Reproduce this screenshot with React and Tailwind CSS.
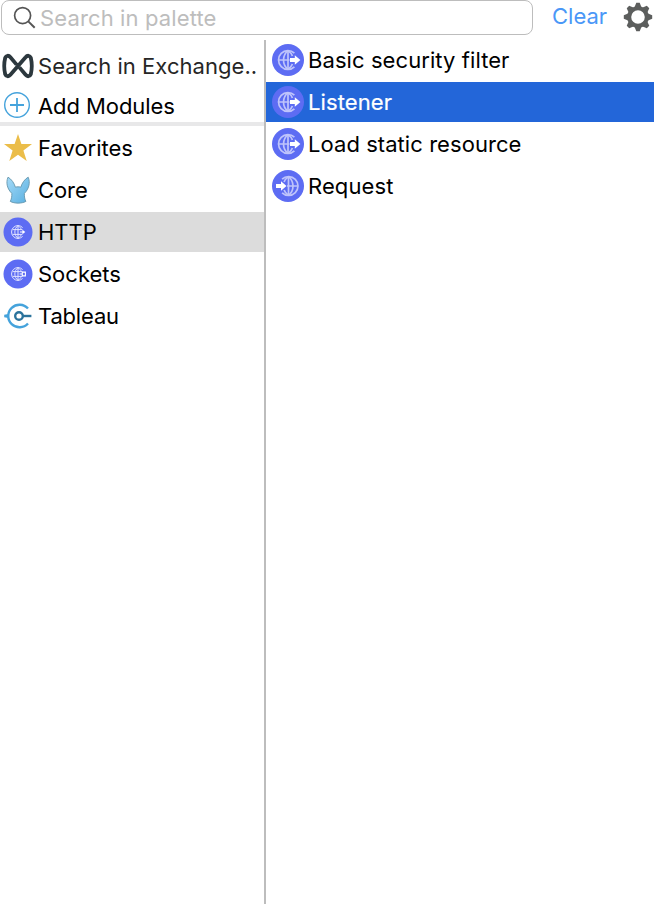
const GEAR_TEETH = [0, 45, 90, 135, 180, 225, 270, 315];

function SearchIcon() {
  return (
    <svg width="24" height="24" viewBox="0 0 24 24" fill="none" stroke="#555" strokeWidth="1.7" className="shrink-0">
      <circle cx="9.6" cy="9.6" r="8" />
      <path d="M15.3 15.4l6.4 6.3" strokeWidth="2" />
    </svg>
  );
}

function GearIcon() {
  return (
    <svg width="30" height="30" viewBox="-15 -15 30 30" className="shrink-0">
      <circle r="8.8" fill="none" stroke="#5c5e5d" strokeWidth="4" />
      {GEAR_TEETH.map((a) => (
        <path key={a} d="M-3.4 -10L-1.7 -14.2H1.7L3.4 -10Z" fill="#5c5e5d" transform={`rotate(${a})`} />
      ))}
    </svg>
  );
}

function ExchangeIcon() {
  return (
    <svg width="32" height="28" viewBox="0 0 32 28" fill="none" stroke="#2c383e" strokeWidth="3.8" strokeLinejoin="round">
      <path d="M14.6 12.6L8.4 5.2C6.6 3 4.2 3.4 3.2 5.8C2 10.8 2 17.2 3.2 22.2C4.2 24.6 6.6 25 8.4 22.8L23.6 5.2C25.4 3 27.8 3.4 28.8 5.8C30 10.8 30 17.2 28.8 22.2C27.8 24.6 25.4 25 23.6 22.8L17.4 15.4" />
    </svg>
  );
}

function AddIcon() {
  return (
    <svg width="28" height="28" viewBox="0 0 28 28" fill="none" stroke="#45a3dc">
      <circle cx="14" cy="14" r="12.3" strokeWidth="1.4" />
      <path d="M14 7v14M7 14h14" strokeWidth="1.8" />
    </svg>
  );
}

function StarIcon() {
  return (
    <svg width="30" height="30" viewBox="0 0 30 30">
      <path d="M15 1L18.4 11.1H29L20.4 17.4L23.7 28L15 21.7L6.3 28L9.6 17.4L1 11.1H11.6Z" fill="#ebbd49" />
    </svg>
  );
}

function CoreIcon() {
  return (
    <svg width="28" height="30" viewBox="0 0 28 30">
      <defs>
        <linearGradient id="core" x1="0" y1="0" x2="1" y2="1">
          <stop offset="0" stopColor="#a4daf8" />
          <stop offset="1" stopColor="#58afe0" />
        </linearGradient>
      </defs>
      <path
        d="M4 2.2C7.4 4 10.3 8.2 11.4 12.2C13 11.7 15.2 11.7 16.8 12.2C17.9 8.2 20.8 4 24.2 2.2C26.6 7.8 24.8 14.2 20.4 18.3C20.2 21.8 20.8 24.6 21.9 26.4C17.8 28.7 10.4 28.7 6.3 26.4C7.4 24.2 8 21.6 7.8 18.3C3.4 14.2 1.6 7.8 4 2.2Z"
        fill="url(#core)"
        stroke="#6595ab"
        strokeWidth="0.9"
      />
    </svg>
  );
}

function SmallGlobe({ socket }) {
  return (
    <svg width="30" height="30" viewBox="0 0 30 30" fill="none">
      <circle cx="15" cy="15" r="14.5" fill="#5d6cf3" />
      <g stroke="#e2e4ff" strokeWidth="1">
        <path d="M19.6 10.6A6.4 6.4 0 1 0 19.6 19.4" />
        <path d="M15 8.6V21.4M9.6 12.6H19.4M9.6 17.4H19.4" />
        <path d="M15 8.6C10.8 11.8 10.8 18.2 15 21.4M15 8.6C17 10 18 11.4 18.2 12.6M15 21.4C17 20 18 18.6 18.2 17.4" />
      </g>
      {socket ? (
        <path d="M16.6 15H19M19.3 13.1H22.4V16.9H19.3Z" stroke="#fff" strokeWidth="1.1" />
      ) : (
        <path d="M17 14.4H19.4V12.8L22.3 15L19.4 17.2V15.6H17Z" fill="#fff" />
      )}
    </svg>
  );
}

function TableauIcon() {
  return (
    <svg width="30" height="28" viewBox="0 0 30 28" fill="none">
      <path d="M25 6.5A11.3 11.3 0 1 0 25 21.5" stroke="#45a3dc" strokeWidth="2.4" />
      <path d="M1.2 12.8L5.4 12V16L1.2 15.2Z" fill="#45a3dc" />
      <circle cx="16" cy="14" r="3.8" stroke="#2b739c" strokeWidth="2.4" />
      <path d="M19.8 14H28.4" stroke="#2b739c" strokeWidth="2.4" />
    </svg>
  );
}

function OperationIcon({ inbound }) {
  return (
    <svg width="32" height="32" viewBox="0 0 32 32" fill="none" className="shrink-0">
      <circle cx="16" cy="16" r="16" fill="#5d6cf3" />
      <g stroke="#bfc4fb" strokeWidth="1.7" transform={inbound ? "matrix(-1 0 0 1 32.5 0)" : undefined}>
        <path d="M22.4 9.2A9.4 9.4 0 1 0 22.4 22.8" />
        <path d="M16 6.6V25.4M6.8 16H17.5" />
        <path d="M16 6.6C10 11.5 10 20.5 16 25.4M16 6.6C18.6 8.4 19.8 10.2 20.4 12M16 25.4C18.6 23.6 19.8 21.8 20.4 20" />
      </g>
      {inbound ? (
        <path d="M4 14H9V11.2L14.5 16L9 20.8V18H4Z" fill="#fff" />
      ) : (
        <path d="M18 14H22.8V11.2L28.4 16L22.8 20.8V18H18Z" fill="#fff" />
      )}
    </svg>
  );
}

const modules = [
  { name: "Favorites", icon: <StarIcon />, tracking: "tracking-[0px]" },
  { name: "Core", icon: <CoreIcon />, tracking: "tracking-[-0.1px]" },
  { name: "HTTP", icon: <SmallGlobe />, tracking: "tracking-[0px]", selected: true },
  { name: "Sockets", icon: <SmallGlobe socket />, tracking: "tracking-[0px]" },
  { name: "Tableau", icon: <TableauIcon />, tracking: "tracking-[-0.18px]" },
];

const operations = [
  { name: "Basic security filter", tracking: "tracking-[0.08px]" },
  { name: "Listener", tracking: "tracking-[0.1px]", selected: true },
  { name: "Load static resource", tracking: "tracking-[0.06px]" },
  { name: "Request", tracking: "tracking-[0.1px]", inbound: true },
];

function IconSlot({ children }) {
  return <span className="flex w-9 shrink-0 items-center justify-center">{children}</span>;
}

export default function App() {
  return (
    <div className="flex h-[904px] w-[654px] flex-col overflow-hidden bg-white font-['Inter','Liberation_Sans',sans-serif] text-[22px] leading-10 whitespace-nowrap text-black">
      <header className="flex h-10 shrink-0 items-start">
        <div className="ml-px flex h-[35px] w-[532px] items-center rounded-lg border border-[#bdbdbd] pl-[11px]">
          <SearchIcon />
          <span className="ml-[3px] tracking-[0.13px] text-[#bdbdbd]">Search in palette</span>
        </div>
        <span className="ml-[19px] w-[56px] leading-[33px] tracking-[0px] text-[#4a97f7]">Clear</span>
        <div className="mt-0.5 ml-[15px]">
          <GearIcon />
        </div>
      </header>
      <main className="flex min-h-0 flex-1">
        <aside className="flex w-[266px] shrink-0 flex-col border-r-2 border-[#bdbdbd]">
          <div className="flex h-[82px] flex-col pt-1.5">
            <div className="flex h-10 items-center">
              <IconSlot><ExchangeIcon /></IconSlot>
              <span className="ml-0.5 tracking-[0.04px] text-[#262626]">Search in Exchange..</span>
            </div>
            <div className="flex h-9 items-center pt-1">
              <span className="-mt-0.5 flex w-[34px] shrink-0 justify-center"><AddIcon /></span>
              <span className="ml-1 tracking-[-0.08px]">Add Modules</span>
            </div>
          </div>
          <div className="h-1 shrink-0 bg-[#e8e8e9]" />
          <div className="flex flex-col gap-0.5 pt-0.5">
            {modules.map((m) => (
              <div key={m.name} className={`flex h-10 items-center ${m.selected ? "bg-[#dcdcdc]" : ""}`}>
                <IconSlot>{m.icon}</IconSlot>
                <span className={`ml-0.5 ${m.tracking}`}>{m.name}</span>
              </div>
            ))}
          </div>
        </aside>
        <section className="flex flex-1 flex-col gap-0.5">
          {operations.map((o) => (
            <div key={o.name} className={`flex h-10 items-center pl-1.5 ${o.selected ? "bg-[#2366d9] font-medium text-white" : ""}`}>
              <OperationIcon inbound={o.inbound} />
              <span className={`ml-1 ${o.selected ? "font-normal [-webkit-text-stroke:0.2px]" : ""} ${o.tracking}`}>{o.name}</span>
            </div>
          ))}
        </section>
      </main>
    </div>
  );
}
